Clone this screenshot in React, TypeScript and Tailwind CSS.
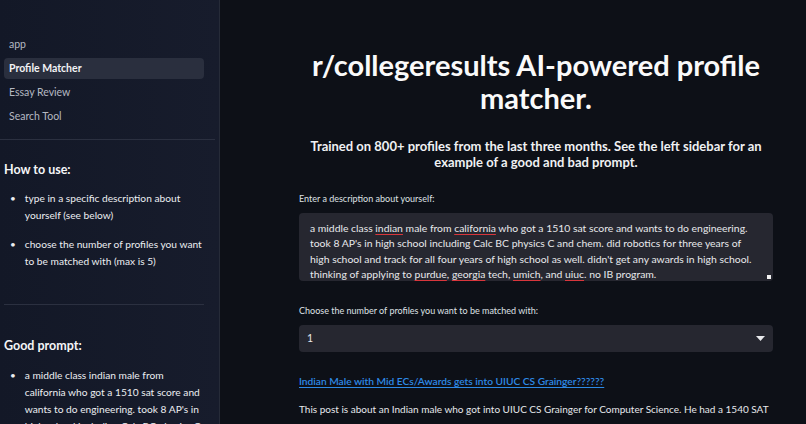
const navItems = ["app", "Profile Matcher", "Essay Review", "Search Tool"];

function Misspelled({ children }: { children: string }) {
  return (
    <span className="underline decoration-[#d8363c] decoration-1 underline-offset-[2px]">
      {children}
    </span>
  );
}

function Sidebar() {
  return (
    <aside className="h-full w-[220px] shrink-0 border-r border-[#262b38] bg-gradient-to-r from-[#131827] to-[#171c2c] text-[#e4e6eb]">
      <nav className="flex flex-col gap-[3px] px-1 pt-[34px]">
        {navItems.map((item) => (
          <div
            key={item}
            className={
              item === "Profile Matcher"
                ? "flex h-[21px] w-[200px] items-center rounded bg-[#2a2f3e] px-[5px] text-[10.5px] font-bold text-[#f2f3f5]"
                : "flex h-[21px] w-[200px] items-center px-[5px] text-[10.5px] text-[#b4b8c2]"
            }
          >
            {item}
          </div>
        ))}
      </nav>
      <div className="mt-[12px] h-px w-[215px] bg-[#2b3040]" />

      <div className="px-1">
        <h3 className="mt-[22px] text-[12.5px] font-bold leading-[16px] text-[#f4f5f7]">How to use:</h3>
        <ul className="mt-[12px] flex flex-col gap-[12px] pl-[6px] pr-3 text-[10.2px] leading-[17px] text-[#eceef1]">
          <li className="flex gap-[9px]">
            <span className="text-[10px]">•</span>
            <span>type in a specific description about yourself (see below)</span>
          </li>
          <li className="flex gap-[9px]">
            <span className="text-[10px]">•</span>
            <span>choose the number of profiles you want to be matched with (max is 5)</span>
          </li>
        </ul>
        <div className="mt-[34px] h-px w-[200px] bg-[#2b3040]" />
        <h3 className="mt-[33px] text-[12.5px] font-bold leading-[16px] text-[#f4f5f7]">Good prompt:</h3>
        <ul className="mt-[13px] pl-[6px] pr-3 text-[10.2px] leading-[17px] text-[#eceef1]">
          <li className="flex gap-[9px]">
            <span className="text-[10px]">•</span>
            <span>
              a middle class indian male from california who got a 1510 sat score and wants to do engineering. took 8
              AP's in high school including Calc BC physics C and chem.
            </span>
          </li>
        </ul>
      </div>
    </aside>
  );
}

function Main() {
  return (
    <main className="h-full flex-1 bg-[#0d1017] pl-[79px] text-[#e6e8ec]">
      <div className="w-[474px]">
        <h1 className="pt-[48px] text-center text-[29px] font-bold leading-[33px] text-[#fafafa]">
          r/collegeresults AI-powered profile matcher.
        </h1>
        <p className="mt-[24px] px-2 text-center text-[13px] font-bold leading-[16px] text-[#f0f1f3]">
          Trained on 800+ profiles from the last three months. See the left sidebar for an example of a good and bad
          prompt.
        </p>

        <label className="mt-[23px] block text-[9px] leading-[12px] text-[#dfe1e5]">
          Enter a description about yourself:
        </label>
        <div className="relative mt-[8px] h-[68px] overflow-hidden rounded bg-[#262730] px-[11px] pt-[8px] text-[10.4px] leading-[15.3px] text-[#e8e9ec]">
          a middle class <Misspelled>indian</Misspelled> male from <Misspelled>california</Misspelled> who got a 1510
          sat score and wants to do engineering. took 8 AP's in high school including Calc BC physics C and chem. did
          robotics for three years of high school and track for all four years of high school as well. didn't get any
          awards in high school. thinking of applying to <Misspelled>purdue</Misspelled>,{" "}
          <Misspelled>georgia</Misspelled> tech, <Misspelled>umich</Misspelled>, and <Misspelled>uiuc</Misspelled>. no
          IB program.
          <span className="absolute bottom-[2px] right-[2px] h-[4px] w-[4px] bg-[#f2f2f2]" />
        </div>

        <label className="mt-[24px] block text-[9px] leading-[12px] text-[#dfe1e5]">
          Choose the number of profiles you want to be matched with:
        </label>
        <div className="mt-[8px] flex h-[27px] items-center justify-between rounded bg-[#262730] pl-[8px] pr-[7px] text-[10.5px] text-[#e8e9ec]">
          <span>1</span>
          <svg width="9" height="5" viewBox="0 0 9 5" className="mr-[1px]">
            <path d="M0 0h9L4.5 5z" fill="#e8e9ec" />
          </svg>
        </div>

        <a className="mt-[21px] block text-[10.2px] font-semibold leading-[16px] text-[#2d8ae6] underline underline-offset-2">
          Indian Male with Mid ECs/Awards gets into UIUC CS Grainger??????
        </a>
        <p className="mt-[12px] whitespace-nowrap text-[10px] leading-[16px]">
          This post is about an Indian male who got into UIUC CS Grainger for Computer Science. He had a 1540 SAT
        </p>
      </div>
    </main>
  );
}

export default function App() {
  return (
    <div className="flex h-[424px] w-[806px] overflow-hidden font-['Lato','Noto_Sans',sans-serif]">
      <Sidebar />
      <Main />
    </div>
  );
}
